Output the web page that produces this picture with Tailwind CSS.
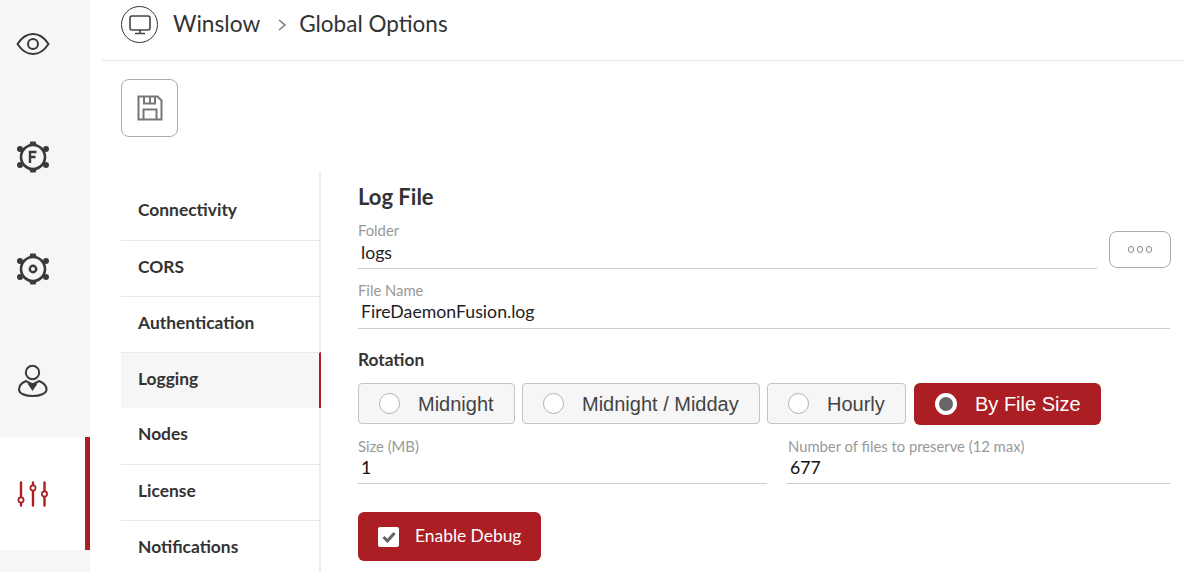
<!DOCTYPE html>
<html>
<head>
<meta charset="UTF-8">
<title>Global Options</title>
<script src="https://cdn.jsdelivr.net/npm/@tailwindcss/browser@4"></script>
</head>
<body class="bg-white overflow-hidden">
<div class="flex h-[572px] w-[1184px] overflow-hidden font-['Lato',sans-serif] text-[#333]">

  <!-- left icon bar -->
  <nav class="w-[90px] shrink-0 bg-[#f6f6f6] overflow-hidden">
    <div class="-mt-[13px]">
      <div class="h-[112.5px] pr-[24px] pt-[2px] flex items-center justify-center text-[#3a3a3a]">
        <svg width="34" height="24" viewBox="0 0 34 24" fill="none" stroke="currentColor" stroke-width="2"><path d="M1.500 12C6 5 11 2 17 2s11 3 15.500 10C28 19 23 22 17 22S6 19 1.500 12z"/><circle cx="17" cy="12" r="5"/></svg>
      </div>
      <div class="h-[112.5px] pr-[24px] pt-[2px] flex items-center justify-center text-[#3a3a3a]">
        <svg width="34" height="36" viewBox="0 0 34 36" fill="none"><circle cx="17" cy="18" r="12" stroke="currentColor" stroke-width="2.600"/><g fill="currentColor"><path d="M13 6.500L14.500 2.500h5L21 6.500z"/><path d="M13 29.500L14.500 33.500h5L21 29.500z"/><circle cx="4" cy="10" r="3"/><circle cx="30" cy="10" r="3"/><circle cx="4" cy="26" r="3"/><circle cx="30" cy="26" r="3"/></g><path d="M14 24V13h6.500M14 18h5.500" stroke="currentColor" stroke-width="2.400"/></svg>
      </div>
      <div class="h-[112.5px] pr-[24px] pt-[2px] flex items-center justify-center text-[#3a3a3a]">
        <svg width="34" height="36" viewBox="0 0 34 36" fill="none"><circle cx="17" cy="18" r="12" stroke="currentColor" stroke-width="2.600"/><g fill="currentColor"><path d="M13 6.500L14.500 2.500h5L21 6.500z"/><path d="M13 29.500L14.500 33.500h5L21 29.500z"/><circle cx="4" cy="10" r="3"/><circle cx="30" cy="10" r="3"/><circle cx="4" cy="26" r="3"/><circle cx="30" cy="26" r="3"/></g><circle cx="17" cy="18" r="3.200" stroke="currentColor" stroke-width="2.400"/></svg>
      </div>
      <div class="h-[112.5px] pr-[24px] flex items-center justify-center text-[#3a3a3a]">
        <svg width="32" height="34" viewBox="0 0 32 34" fill="none" stroke="currentColor" stroke-width="2"><circle cx="15.500" cy="8.500" r="6.700"/><path d="M9 17C4 19 2 22 2 25.500c0 4 6 6.500 13.500 6.500S29.500 29.500 29.500 25.500C29.500 22 27 19 22 17L15.500 20.500z"/><path d="M10.500 19.500h10L15.500 27z" fill="currentColor" stroke="none"/></svg>
      </div>
      <div class="h-[112.5px] pr-[19px] pt-[2px] flex items-center justify-center bg-white border-r-[5px] border-[#ab1e23] text-[#ab1e23]">
        <svg width="34" height="28" viewBox="0 0 34 28" fill="none" stroke="currentColor" stroke-width="2.400" stroke-linecap="round"><path d="M5 2.500v23M17 2.500v23M28.500 2.500v23"/><g fill="#fff" stroke-width="1.700"><circle cx="5" cy="20" r="2.600"/><circle cx="17" cy="8" r="2.600"/><circle cx="28.500" cy="14" r="2.600"/></g></svg>
      </div>
    </div>
  </nav>

  <main class="flex-1 min-w-0 pl-[12px]">
    <!-- breadcrumb -->
    <header class="h-[61px] border-b border-[#e4e4e4] pl-[19px] flex items-start pt-[6px]">
      <span class="w-[37px] h-[37px] rounded-full border-[1.500px] border-[#333] flex items-center justify-center">
        <svg width="22" height="20" viewBox="0 0 22 20" fill="none" stroke="#444" stroke-width="1.600"><rect x="1" y="1" width="20" height="14" rx="2"/><path d="M11 15v3M6 18.500h10"/></svg>
      </span>
      <span class="ml-[15px] text-[22.7px] leading-[35px] text-[#333]">Winslow</span>
      <svg class="ml-[17px] mt-[13px]" width="10" height="12" viewBox="0 0 10 12" fill="none" stroke="#777" stroke-width="1.500"><path d="M2 1l6 5-6 5"/></svg>
      <span class="ml-[12px] text-[22.5px] leading-[35px] text-[#333]">Global Options</span>
    </header>

    <div class="pl-[19px] pt-[18px]">
      <button class="w-[57px] h-[58px] rounded-[8px] border border-[#aaa] flex items-center justify-center">
        <svg width="26" height="26" viewBox="0 0 26 26" fill="none" stroke="#777" stroke-width="2"><path d="M1.500 1.500h19l4 4v19h-23z"/><path d="M7 1.500v7h11v-7M13 2v6"/><path d="M6.500 24v-9.500h13V24"/></svg>
      </button>
    </div>

    <div class="flex pl-[19px] mt-[34px]">
      <!-- settings tabs -->
      <ul class="w-[200px] shrink-0 border-r-2 border-[#ececec] h-[420px] pt-[11px] text-[17.4px] font-bold text-[#333] leading-[24px]">
        <li class="h-[59px] flex items-center pl-[17px] pb-[2px] border-b border-[#e8e8e8]">Connectivity</li>
        <li class="h-[56px] flex items-center pl-[17px] pb-[3px] border-b border-[#e8e8e8]">CORS</li>
        <li class="h-[55px] flex items-center pl-[17px] pb-[3px]">Authentication</li>
        <li class="h-[56px] flex items-center pl-[17px] pb-[3px] bg-[#f6f6f6] border-t border-[#e8e8e8] border-r-2 border-r-[#ab1e23] -mr-[2px]">Logging</li>
        <li class="h-[57px] flex items-center pl-[17px] pb-[4px] border-b border-[#e8e8e8]">Nodes</li>
        <li class="h-[56px] flex items-center pl-[17px] pb-[4px] border-b border-[#e8e8e8]">License</li>
        <li class="h-[56px] flex items-center pl-[17px] pb-[4px]">Notifications</li>
      </ul>

      <!-- log file form -->
      <section class="w-[812px] ml-[37px] pt-[11px]">
        <h2 class="text-[22px] leading-[30px] font-bold text-[#333]">Log File</h2>

        <div class="flex items-start mt-[9px]">
          <div class="w-[739px] shrink-0">
            <div class="text-[14.8px] leading-[18px] text-[#999]">Folder</div>
            <div class="h-[30px] border-b border-[#ccc] pl-[3px] pt-[1px] text-[17.7px] leading-[26px] text-[#222]">logs</div>
          </div>
          <button class="ml-[12px] mt-[10px] w-[62px] h-[37px] shrink-0 rounded-[8px] border border-[#aaa] flex items-center justify-center gap-[2.500px]">
            <span class="w-[6.500px] h-[6.500px] rounded-full border-[1.500px] border-[#888]"></span>
            <span class="w-[6.500px] h-[6.500px] rounded-full border-[1.500px] border-[#888]"></span>
            <span class="w-[6.500px] h-[6.500px] rounded-full border-[1.500px] border-[#888]"></span>
          </button>
        </div>

        <div class="mt-[12px]">
          <div class="text-[14.8px] leading-[18px] text-[#999]">File Name</div>
          <div class="h-[30px] border-b border-[#ccc] pl-[3px] text-[17.7px] leading-[26px] text-[#222]">FireDaemonFusion.log</div>
        </div>

        <h3 class="mt-[19px] text-[17.3px] leading-[24px] font-bold text-[#333]">Rotation</h3>

        <div class="flex items-start mt-[11px] font-['Liberation_Sans',sans-serif] text-[20px] text-[#444]">
          <label class="w-[157px] h-[41px] rounded-[4px] border border-[#c4c4c4] bg-[#f6f6f6] flex items-center pl-[20px]">
            <span class="w-[21px] h-[21px] rounded-full border border-[#b0b0b0] bg-white shrink-0"></span><span class="ml-[18px]">Midnight</span>
          </label>
          <label class="ml-[7px] w-[238px] h-[41px] rounded-[4px] border border-[#c4c4c4] bg-[#f6f6f6] flex items-center pl-[20px]">
            <span class="w-[21px] h-[21px] rounded-full border border-[#b0b0b0] bg-white shrink-0"></span><span class="ml-[18px]">Midnight / Midday</span>
          </label>
          <label class="ml-[7px] w-[139px] h-[41px] rounded-[4px] border border-[#c4c4c4] bg-[#f6f6f6] flex items-center pl-[20px]">
            <span class="w-[21px] h-[21px] rounded-full border border-[#b0b0b0] bg-white shrink-0"></span><span class="ml-[18px]">Hourly</span>
          </label>
          <label class="ml-[8px] w-[187px] h-[42px] rounded-[6px] bg-[#ab1e23] text-white flex items-center pl-[21px]">
            <span class="w-[22px] h-[22px] rounded-full border-[4px] border-white bg-[#666] shrink-0"></span><span class="ml-[18px]">By File Size</span>
          </label>
        </div>

        <div class="flex mt-[12px]">
          <div class="w-[409px]">
            <div class="text-[14.8px] leading-[18px] text-[#999]">Size (MB)</div>
            <div class="h-[29px] border-b border-[#ccc] pl-[3px] text-[17.7px] leading-[26px] text-[#111]">1</div>
          </div>
          <div class="w-[383px] ml-[20px]">
            <div class="pl-[1px] text-[14.8px] leading-[18px] text-[#999]">Number of files to preserve (12 max)</div>
            <div class="h-[29px] border-b border-[#ccc] pl-[3px] text-[17.7px] leading-[26px] text-[#111]">677</div>
          </div>
        </div>

        <label class="mt-[28px] w-[183px] h-[49px] rounded-[6px] bg-[#ab1e23] text-white flex items-center pl-[20px] text-[17.4px]">
          <span class="w-[21px] h-[20px] rounded-[2px] bg-white flex items-center justify-center shrink-0">
            <svg width="14" height="12" viewBox="0 0 14 12" fill="none" stroke="#666" stroke-width="3"><path d="M1.500 6l4 4 7-8"/></svg>
          </span>
          <span class="ml-[16px]">Enable Debug</span>
        </label>
      </section>
    </div>
  </main>
</div>
</body>
</html>
